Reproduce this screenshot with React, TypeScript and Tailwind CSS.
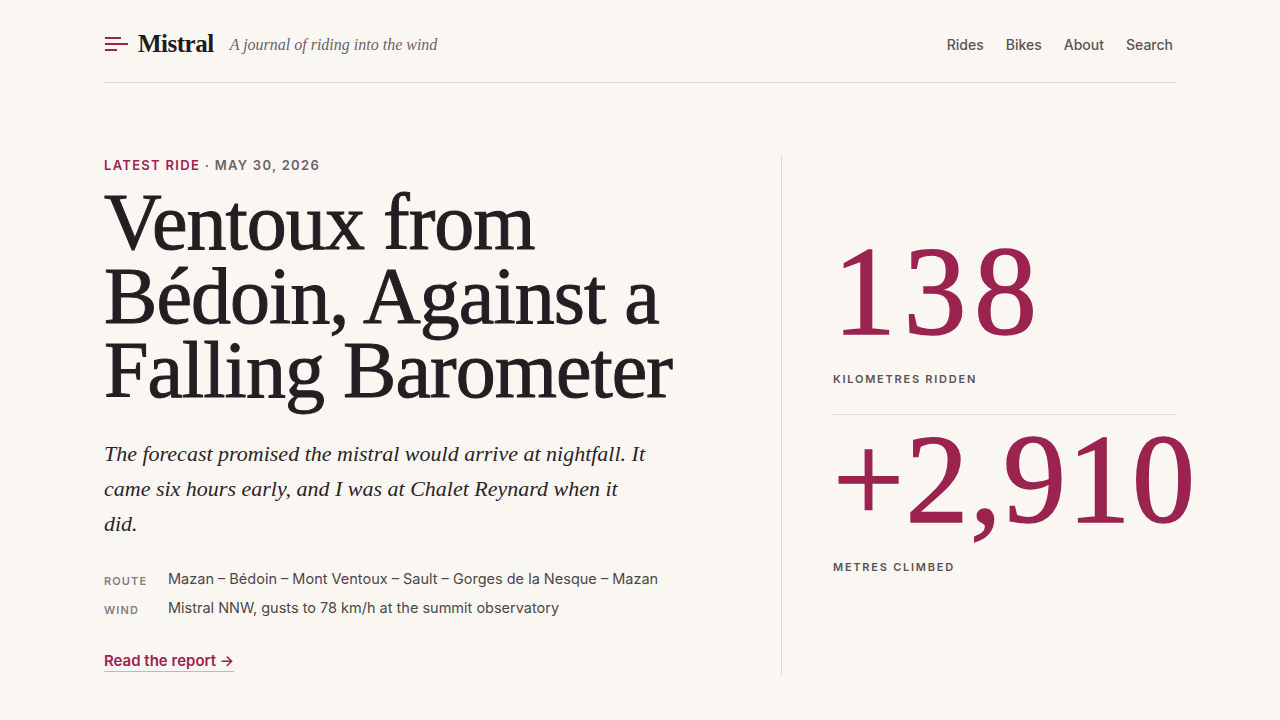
const serif = { fontFamily: '"Liberation Serif", "DejaVu Serif", serif' };

function MenuMark() {
  return (
    <svg width="24" height="18" viewBox="0 0 24 18" className="shrink-0">
      <rect x="1" y="2" width="16" height="2" fill="#9b2350" />
      <rect x="1" y="8" width="23" height="2" fill="#9b2350" />
      <rect x="1" y="14" width="12" height="2" fill="#9b2350" />
    </svg>
  );
}

function Stat({ value, label, tracking }: { value: string; label: string; tracking: string }) {
  return (
    <div>
      <div
        className={`text-[126px] leading-none text-[#9b2350] whitespace-nowrap [-webkit-text-stroke:1.5px_#9b2350] ${tracking}`}
        style={serif}
      >
        {value}
      </div>
      <div className="mt-[16px] text-[11px] font-semibold uppercase tracking-[0.16em] text-[#5a5254]">
        {label}
      </div>
    </div>
  );
}

export default function App() {
  return (
    <div
      className="min-h-screen bg-[#faf7f2] text-[#221e22]"
      style={{ fontFamily: 'Inter, "Liberation Sans", sans-serif' }}
    >
      <div className="mx-auto max-w-[1072px]">
        {/* Header */}
        <header className="flex h-[83px] items-center justify-between border-b border-[#dcd7d2] pt-[6px]">
          <div className="flex items-center">
            <MenuMark />
            <span className="ml-[10px] text-[25px] font-bold tracking-[-0.02em] text-[#1f1b1f]" style={serif}>
              Mistral
            </span>
            <span className="ml-[16px] mt-[2px] text-[16px] italic text-[#6b6366]" style={serif}>
              A journal of riding into the wind
            </span>
          </div>
          <nav className="mr-[3px] flex items-center gap-[22px] text-[14px] font-medium text-[#5a5356]">
            <a>Rides</a>
            <a>Bikes</a>
            <a>About</a>
            <a>Search</a>
          </nav>
        </header>

        {/* Feature */}
        <main className="grid grid-cols-[677px_minmax(0,1fr)] pt-[72px]">
          <section className="pb-[2px]">
            <p className="text-[13px] font-semibold uppercase tracking-[0.1em] leading-[20px]">
              <span className="text-[#9b2350]">Latest ride</span>
              <span className="text-[#6b6366]"> · May 30, 2026</span>
            </p>
            <h1
              className="mt-[10px] max-w-[600px] text-[80px] leading-[74px] tracking-[-0.012em] text-[#221e22] [-webkit-text-stroke:1px_#221e22]"
              style={serif}
            >
              Ventoux from Bédoin, Against a Falling Barometer
            </h1>
            <p
              className="mt-[29px] max-w-[548px] text-[22px] italic leading-[35px] text-[#2a2428]"
              style={serif}
            >
              The forecast promised the mistral would arrive at nightfall. It came six hours early, and I was at
              Chalet Reynard when it did.
            </p>
            <dl className="mt-[27px] grid grid-cols-[64px_1fr] gap-y-[5px] text-[14.5px] leading-[22px]">
              <dt className="pt-[2px] text-[11px] font-semibold uppercase tracking-[0.1em] text-[#857d80]">Route</dt>
              <dd className="text-[#4d4649]">Mazan – Bédoin – Mont Ventoux – Sault – Gorges de la Nesque – Mazan</dd>
              <dt className="pt-[2px] text-[11px] font-semibold uppercase tracking-[0.1em] text-[#857d80]">Wind</dt>
              <dd className="text-[#4d4649]">Mistral NNW, gusts to 78 km/h at the summit observatory</dd>
            </dl>
            <a className="mt-[29px] inline-block text-[15px] font-semibold text-[#9b2350] underline decoration-[#e3a6bd] decoration-1 underline-offset-[5px]">
              Read the report →
            </a>
          </section>

          <aside className="flex min-w-0 flex-col border-l border-[#dcd7d2] pl-[51px] pt-[74px]">
            <div className="border-b border-[#e2ddd8] pb-[26px]">
              <Stat value="138" label="Kilometres ridden" tracking="tracking-[0.06em]" />
            </div>
            <div className="pt-[2px]">
              <Stat value="+2,910" label="Metres climbed" tracking="tracking-[0.012em]" />
            </div>
          </aside>
        </main>
      </div>
    </div>
  );
}
